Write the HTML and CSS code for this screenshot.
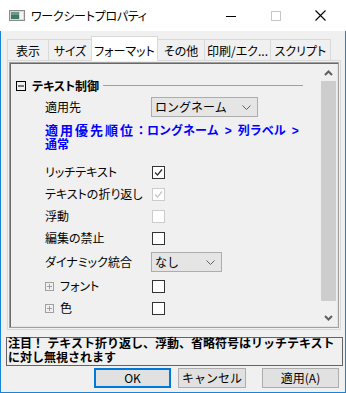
FILE: index.html
```html
<!DOCTYPE html>
<html lang="ja">
<head>
<meta charset="utf-8">
<link rel="stylesheet" href="styles.css">
</head>
<body>
<div class="window">
  <div class="titlebar">
    <svg class="appicon" width="16" height="11" viewBox="0 0 16 11">
      <rect x="0.5" y="0.5" width="15" height="10" fill="#d8d8d8" stroke="#8a8a8a"/>
      <rect x="2" y="2" width="8" height="7" fill="#3f7a66"/>
      <rect x="2" y="2" width="8" height="3" fill="#6a9a86"/>
      <rect x="11" y="2" width="3" height="7" fill="#f4f4f4"/>
    </svg>
    <span class="title">ワークシートプロパティ</span>
    <div class="caption">
      <div class="capbtn"><svg width="10" height="10" viewBox="0 0 10 10"><line x1="0" y1="5.5" x2="10" y2="5.5" stroke="#000" stroke-width="1"/></svg></div>
      <div class="capbtn"><svg width="10" height="10" viewBox="0 0 10 10"><rect x="0.5" y="0.5" width="9" height="9" fill="none" stroke="#c6c6c6"/></svg></div>
      <div class="capbtn"><svg width="11" height="11" viewBox="0 0 11 11"><path d="M0.5 0.5 L10.5 10.5 M10.5 0.5 L0.5 10.5" stroke="#000" stroke-width="1.1"/></svg></div>
    </div>
  </div>
  <div class="client">
    <div class="tabs">
      <div class="tab w41">表示</div>
      <div class="tab w43">サイズ</div>
      <div class="tab sel w66">フォーマット</div>
      <div class="tab w47">その他</div>
      <div class="tab w66">印刷/エク...</div>
      <div class="tab w60">スクリプト</div>
    </div>
    <div class="tabpage">
      <div class="grid">
        <div class="content">
          <div class="heading">
            <svg class="tree-icon" width="10" height="10" viewBox="0 0 10 10"><rect x="0.5" y="0.5" width="9" height="9" fill="none" stroke="#000"/><line x1="2" y1="5" x2="8" y2="5" stroke="#000"/></svg>
            <span class="heading-text">テキスト制御</span>
            <span class="heading-line"></span>
          </div>
          <div class="row row-apply">
            <span class="label">適用先</span>
            <div class="combo combo-long"><span>ロングネーム</span><svg width="9" height="5" viewBox="0 0 9 5"><path d="M0.5 0.5 L4.5 4.5 L8.5 0.5" fill="none" stroke="#606060"/></svg></div>
          </div>
          <div class="priority"><span class="wide">適用優先順位</span>：ロングネーム&ensp;&gt;&ensp;列ラベル&ensp;&gt;<br>通常</div>
          <div class="row">
            <span class="label">リッチテキスト</span>
            <span class="check"><svg width="11" height="11" viewBox="0 0 11 11"><path d="M2 5.5 L4.5 8 L9 2.5" fill="none" stroke="#333" stroke-width="1.3"/></svg></span>
          </div>
          <div class="row">
            <span class="label">テキストの折り返し</span>
            <span class="check disabled"><svg width="11" height="11" viewBox="0 0 11 11"><path d="M2 5.5 L4.5 8 L9 2.5" fill="none" stroke="#c8c8c8" stroke-width="1.3"/></svg></span>
          </div>
          <div class="row">
            <span class="label">浮動</span>
            <span class="check disabled"></span>
          </div>
          <div class="row">
            <span class="label">編集の禁止</span>
            <span class="check"></span>
          </div>
          <div class="row row-tall">
            <span class="label">ダイナミック統合</span>
            <div class="combo combo-short"><span>なし</span><svg width="9" height="5" viewBox="0 0 9 5"><path d="M0.5 0.5 L4.5 4.5 L8.5 0.5" fill="none" stroke="#606060"/></svg></div>
          </div>
          <div class="row">
            <span class="label label-tree"><svg class="plus" width="9" height="9" viewBox="0 0 9 9"><rect x="0.5" y="0.5" width="8" height="8" fill="none" stroke="#a0a0a0"/><path d="M2 4.5 H7 M4.5 2 V7" stroke="#a0a0a0"/></svg>フォント</span>
            <span class="check"></span>
          </div>
          <div class="row">
            <span class="label label-tree"><svg class="plus" width="9" height="9" viewBox="0 0 9 9"><rect x="0.5" y="0.5" width="8" height="8" fill="none" stroke="#a0a0a0"/><path d="M2 4.5 H7 M4.5 2 V7" stroke="#a0a0a0"/></svg>色</span>
            <span class="check"></span>
          </div>
        </div>
        <div class="scrollbar">
          <div class="sb-btn"><svg width="9" height="6" viewBox="0 0 9 6"><path d="M1 5 L4.5 1.5 L8 5" fill="none" stroke="#606060" stroke-width="2"/></svg></div>
          <div class="sb-track"><div class="sb-thumb"></div></div>
          <div class="sb-btn"><svg width="9" height="6" viewBox="0 0 9 6"><path d="M1 1 L4.5 4.5 L8 1" fill="none" stroke="#606060" stroke-width="2"/></svg></div>
        </div>
      </div>
    </div>
    <div class="note">注目！ テキスト折り返し、浮動、省略符号はリッチテキスト<br>に対し無視されます</div>
    <div class="buttons">
      <div class="btn default">OK</div>
      <div class="btn cancel">キャンセル</div>
      <div class="btn apply">適用(A)</div>
    </div>
  </div>
</div>
</body>
</html>
```

FILE: styles.css
```css
html, body {
  margin: 0;
  padding: 0;
  background: #fff;
}
body {
  font-family: "Noto Sans CJK JP", "Noto Sans", sans-serif;
  font-size: 12px;
  color: #000;
}
.window {
  width: 346px;
  height: 393px;
  display: flex;
  flex-direction: column;
}
.titlebar {
  height: 31px;
  flex-shrink: 0;
  display: flex;
  align-items: center;
  background: #fff;
}
.appicon {
  margin-left: 9px;
}
.title {
  margin-left: 6px;
  font-size: 12px;
  line-height: 14px;
  font-feature-settings: "palt";
  letter-spacing: -0.3px;
}
.caption {
  margin-left: auto;
  margin-right: 3px;
  display: flex;
}
.capbtn {
  width: 45px;
  height: 31px;
  display: flex;
  align-items: center;
  justify-content: center;
}
.client {
  flex: 1;
  display: flex;
  flex-direction: column;
  background: #f0f0f0;
  border: 1px solid #1883d7;
  border-top: none;
}
.tabs {
  display: flex;
  align-items: flex-end;
  height: 24px;
  margin: 5px 0 0 6px;
  position: relative;
  z-index: 1;
}
.tab {
  box-sizing: border-box;
  height: 21px;
  border: 1px solid #d9d9d9;
  border-bottom: none;
  margin-right: -1px;
  background: #f0f0f0;
  display: flex;
  align-items: center;
  justify-content: center;
  font-feature-settings: "palt";
  line-height: 14px;
  padding-top: 1px;
}
.tab.sel {
  height: 25px;
  margin-bottom: -1px;
  background: #fff;
  position: relative;
  z-index: 2;
  padding-top: 3px;
}
.w41 { width: 42px; }
.w43 { width: 44px; }
.w66 { width: 67px; }
.w47 { width: 48px; }
.w60 { width: 61px; }
.tabpage {
  box-sizing: border-box;
  height: 270px;
  margin: 0 4px 0 6px;
  border: 1px solid #d9d9d9;
  padding: 1px;
  background: #f0f0f0;
}
.grid {
  box-sizing: border-box;
  height: 100%;
  border: 1px solid #a0a0a0;
  box-shadow: inset 1px 1px 0 #696969, inset -1px -1px 0 #e3e3e3;
  padding: 1px;
  display: flex;
}
.content {
  flex: 1;
  display: flex;
  flex-direction: column;
  padding-top: 15px;
}
.heading {
  display: flex;
  align-items: center;
  height: 14px;
  padding-left: 5px;
}
.tree-icon { flex-shrink: 0; }
.heading-text {
  margin-left: 6px;
  font-weight: bold;
  line-height: 14px;
  font-feature-settings: "palt";
}
.heading-line {
  margin-left: 4px;
  width: 200px;
  height: 1px;
  background: #a0a0a0;
  margin-top: -1px;
}
.row {
  display: flex;
  align-items: center;
  height: 22px;
  padding-left: 34px;
}
.row-apply {
  height: 20px;
  margin-top: 4px;
}
.row-tall { height: 26px; }
.label {
  width: 107px;
  flex-shrink: 0;
  line-height: 14px;
  font-feature-settings: "palt";
  display: flex;
  align-items: center;
}
.label-tree .plus { margin-right: 6px; }
.combo {
  box-sizing: border-box;
  height: 20px;
  margin-left: -1px;
  background: #e5e5e5;
  border: 1px solid #adadad;
  display: flex;
  align-items: center;
  justify-content: space-between;
  padding: 0 6px 0 3px;
  line-height: 14px;
}
.combo-long { width: 107px; }
.combo-short { width: 71px; }
.priority {
  margin-top: 7px;
  margin-bottom: 9px;
  padding-left: 34px;
  color: #0000ff;
  font-family: "Liberation Sans", "Noto Sans CJK JP", sans-serif;
  font-weight: bold;
  line-height: 13.5px;
}
.wide {
  font-size: 13px;
  letter-spacing: 2px;
}
.check {
  box-sizing: border-box;
  width: 13px;
  height: 13px;
  border: 1px solid #333;
  background: #fff;
  display: flex;
  align-items: center;
  justify-content: center;
}
.check.disabled { border-color: #cccccc; }
.scrollbar {
  width: 17px;
  display: flex;
  flex-direction: column;
  background: #f0f0f0;
}
.sb-btn {
  height: 17px;
  display: flex;
  align-items: center;
  justify-content: center;
}
.sb-track {
  flex: 1;
  display: flex;
  flex-direction: column;
  padding: 0 1px 8px;
}
.sb-thumb {
  flex: 1;
  background: #cdcdcd;
}
.note {
  box-sizing: border-box;
  height: 29px;
  margin: 7px 2px 0 5px;
  border: 1px solid #646464;
  font-family: "Liberation Sans", "Noto Sans CJK JP", sans-serif;
  font-weight: bold;
  line-height: 13.5px;
  padding: 0 0 0 1px;
  white-space: nowrap;
}
.buttons {
  display: flex;
  justify-content: flex-end;
  margin: 2px 6px 0 0;
}
.btn {
  box-sizing: border-box;
  height: 20px;
  background: #e1e1e1;
  border: 1px solid #adadad;
  display: flex;
  align-items: center;
  justify-content: center;
  line-height: 14px;
}
.btn.default {
  width: 77px;
  border: 2px solid #0078d7;
}
.btn.cancel {
  width: 68px;
  margin-left: 7px;
}
.btn.apply {
  width: 77px;
  margin-left: 16px;
}
```
